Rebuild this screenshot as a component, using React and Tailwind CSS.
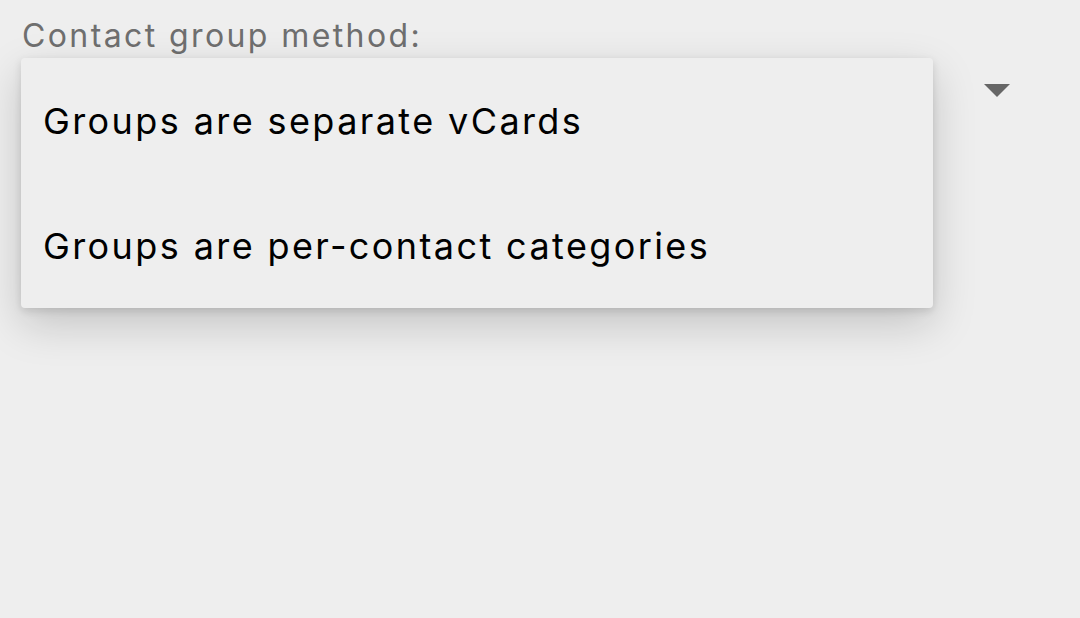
export default function App() {
  const options = ["Groups are separate vCards", "Groups are per-contact categories"];

  return (
    <div
      className="relative h-[618px] w-full overflow-hidden bg-[#eeeeee]"
      style={{ fontFamily: "Inter, 'Noto Sans', sans-serif" }}
    >
      <p className="pl-[22px] pt-[14px] text-[32px] leading-[44px] tracking-[2.4px] text-[#6f6f6f]">
        Contact group method:
      </p>

      {/* the spinner under the open menu */}
      <div className="relative ml-[21px] mr-[70px] h-[60px]">
        <svg
          className="absolute right-0 top-[26px]"
          width="26"
          height="14"
          viewBox="0 0 26 14"
        >
          <path d="M0 0 L26 0 L13 13 Z" fill="#666666" />
        </svg>
      </div>

      {/* open dropdown */}
      <div className="absolute left-[21px] top-[58px] w-[912px] rounded-[4px] bg-[#eeeeee] shadow-[0_16px_44px_rgba(0,0,0,0.18),0_3px_8px_rgba(0,0,0,0.12)]">
        {options.map((o) => (
          <div
            key={o}
            className="flex h-[125px] items-center px-[22px] text-[36px] tracking-[2.4px] text-black"
          >
            {o}
          </div>
        ))}
      </div>
    </div>
  );
}
